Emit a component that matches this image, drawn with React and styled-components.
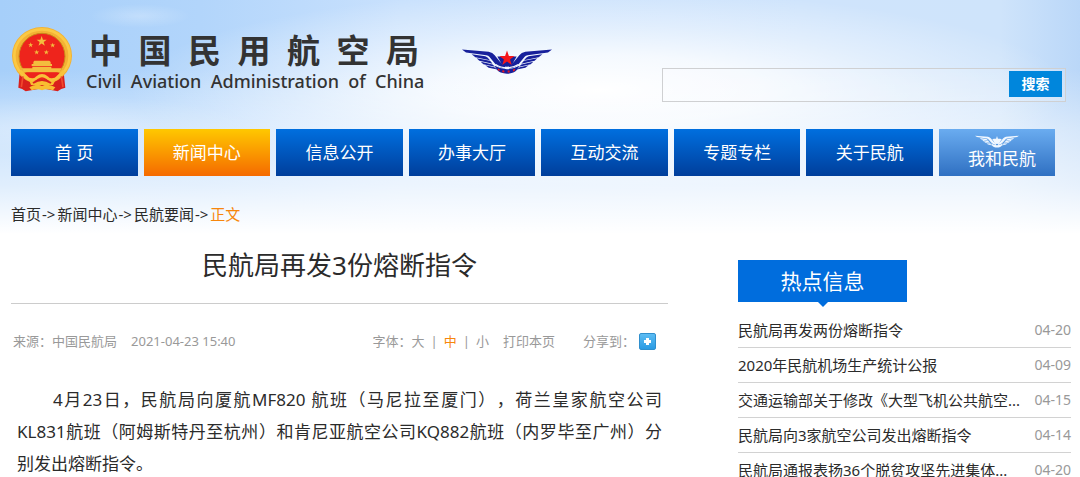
import React from 'react';
import styled, { createGlobalStyle } from 'styled-components';

const GlobalStyle = createGlobalStyle`
	* {
		box-sizing: border-box;
	}

	body {
		margin: 0;
		background: #fff;
		color: #2b2b2b;
		font-family: 'Noto Sans', 'Noto Sans CJK SC', sans-serif;
		font-size: 15px;
	}

	a {
		color: inherit;
		text-decoration: none;
	}

	h1, h2, p, ul {
		margin: 0;
		padding: 0;
		font-weight: 400;
	}
`;

const Page = styled.div`
	padding: 0 9px 24px 11px;
	background:
		linear-gradient(to bottom, transparent 70px, rgba(255, 255, 255, 0.4) 128px, rgba(255, 255, 255, 0.65) 185px, #fff 234px),
		radial-gradient(ellipse 50px 12px at 140px 16px, rgba(255, 255, 255, 0.25), transparent 100%),
		radial-gradient(ellipse 190px 30px at 60px 126px, rgba(255, 255, 255, 0.3), transparent 100%),
		radial-gradient(ellipse 470px 100px at 600px 90px, #fff 0%, rgba(255, 255, 255, 0.8) 35%, rgba(255, 255, 255, 0.4) 65%, transparent 100%),
		linear-gradient(to right, #a6cffa 0, #b2d5fb 200px, #c9e1fd 400px, #cfe4fc 800px, #cfe4fb 1000px, #bad7f8 1080px);
	background-color: #fff;
`;

const Header = styled.header`
	display: flex;
	align-items: flex-start;
	padding: 27px 5px 27px 0;
`;

const Brand = styled.a`
	display: flex;
	align-items: flex-start;
	color: #333;
`;

const BrandText = styled.div`
	padding-left: 13px;
`;

const BrandName = styled.div`
	padding-left: 3px;
	font-family: 'Noto Sans CJK SC', sans-serif;
	font-size: 33px;
	font-weight: 700;
	line-height: 45px;
	white-space: nowrap;
`;

const BrandSub = styled.div`
	font-size: 18px;
	font-weight: 500;
	line-height: 18px;
	white-space: pre;
`;

const WingMark = styled.div`
	padding: 22px 0 0 38px;
`;

const Search = styled.form`
	display: flex;
	flex: 0 0 404px;
	height: 34px;
	margin: 41px 0 0 auto;
	padding: 2px 3px 4px 2px;
	border: 1px solid #cfd0d2;
	background: rgba(255, 255, 255, 0.15);
`;

const SearchInput = styled.input`
	flex: 1;
	min-width: 0;
	border: 0;
	outline: 0;
	background: transparent;
	font: inherit;
`;

const SearchButton = styled.button`
	width: 53px;
	padding: 0;
	border: 0;
	background: #0086dc;
	color: #fff;
	font-family: inherit;
	font-size: 14px;
	font-weight: 700;
	line-height: 26px;
`;

const Nav = styled.nav`
	display: flex;
	gap: 6px;
	margin-right: 16px;
`;

const NavItem = styled.a`
	flex: 1;
	height: 47px;
	background: ${(p) => (p.$active ? 'linear-gradient(#ffc800, #f56a00)' : 'linear-gradient(#006fdf, #003e9b)')};
	color: #fff;
	font-size: 17px;
	line-height: 48px;
	text-align: center;
	white-space: pre;
`;

const NavExtra = styled.a`
	display: flex;
	flex: 0 0 116px;
	flex-direction: column;
	align-items: center;
	height: 47px;
	padding-top: 6px;
	background: linear-gradient(#6aacf0, #2f70c2);
	color: #fff;
	font-size: 17px;
	line-height: 22px;

	span {
		padding-left: 10px;
	}
`;

const Crumbs = styled.nav`
	padding-top: 26px;
	font-size: 15px;
	line-height: 24px;
`;

const Arrow = styled.span`
	padding: 0 2px 0 1px;
`;

const Current = styled.span`
	color: #f7860c;
`;

const Columns = styled.div`
	display: grid;
	grid-template-columns: 657fr 333fr;
	gap: 70px;
	padding-top: 16px;
`;

const Title = styled.h1`
	padding: 3px 0 18px;
	border-bottom: 1px solid #ccc;
	font-size: 26px;
	line-height: 40px;
	text-align: center;
`;

const Meta = styled.div`
	display: flex;
	justify-content: space-between;
	padding: 25px 12px 0 2px;
	color: #999;
	font-size: 13px;
	line-height: 24px;
`;

const MetaGroup = styled.div`
	display: flex;
	align-items: center;
	gap: ${(p) => p.$gap}px;
`;

const SizeButton = styled.button`
	padding: 0;
	border: 0;
	background: none;
	color: ${(p) => (p.$active ? '#f7860c' : 'inherit')};
	font: inherit;
`;

const ShareButton = styled.button`
	display: flex;
	align-items: center;
	justify-content: center;
	width: 17px;
	height: 17px;
	padding: 0;
	border: 1px solid #2f8fcd;
	border-radius: 2px;
	background: linear-gradient(#5cbcf3, #2a9be3);
`;

const Body = styled.p`
	padding: 31px 6px 0;
	font-size: 17px;
	line-height: 32px;
	text-align: justify;
	text-indent: 36px;
	text-spacing-trim: space-all;
`;

const HotTitle = styled.h2`
	position: relative;
	width: 169px;
	margin-top: 18px;
	background: #006ddd;
	color: #fff;
	font-size: 21px;
	line-height: 42px;
	text-align: center;

	&::after {
		content: '';
		position: absolute;
		top: 100%;
		left: 50%;
		margin-left: -5px;
		border: 5px solid transparent;
		border-top-color: #006ddd;
		border-bottom: 0;
	}
`;

const HotList = styled.ul`
	padding-top: 11px;
	list-style: none;
`;

const HotItem = styled.li`
	display: flex;
	justify-content: space-between;
	border-bottom: 1px solid #d2d2d2;
	line-height: 34px;
	white-space: nowrap;
`;

const HotDate = styled.time`
	color: #999;
	font-size: 14px;
`;

const navItems = ['首 页', '新闻中心', '信息公开', '办事大厅', '互动交流', '专题专栏', '关于民航'];

const crumbs = ['首页', '新闻中心', '民航要闻'];

const hotItems = [
	{ title: '民航局再发两份熔断指令', date: '04-20' },
	{ title: '2020年民航机场生产统计公报', date: '04-09' },
	{ title: '交通运输部关于修改《大型飞机公共航空...', date: '04-15' },
	{ title: '民航局向3家航空公司发出熔断指令', date: '04-14' },
	{ title: '民航局通报表扬36个脱贫攻坚先进集体...', date: '04-20' },
];

const STAR = 'M0-10 2.4-3.1 9.5-3.1 3.8 1.2 5.9 8.1 0 3.9-5.9 8.1-3.8 1.2-9.5-3.1-2.4-3.1Z';

function Emblem() {
	return (
		<svg width="62" height="65" viewBox="0 0 186 195" aria-hidden="true">
			<path d="M26 136 L22 182 Q34 184 44 193 L82 186 H104 L140 193 Q150 184 163 182 L158 136Z" fill="#d9201c" />
			<ellipse cx="93" cy="86" rx="90" ry="86" fill="#f3b234" />
			<ellipse cx="93" cy="86" rx="83" ry="79" fill="none" stroke="#fbc944" strokeWidth="8" />
			<circle cx="93" cy="88" r="69" fill="#ee241c" stroke="#c98a18" strokeWidth="3" />
			<g fill="#f3bd3e">
				<path d={STAR} transform="translate(92 43) scale(1.6)" />
				<path d={STAR} transform="translate(59 54) scale(.8)" />
				<path d={STAR} transform="translate(125 55) scale(.8)" />
				<path d={STAR} transform="translate(77 76) scale(.8)" />
				<path d={STAR} transform="translate(106 76) scale(.8)" />
				<path d="M67 105 L70 101 H115 L119 105 V111 H123 V117 H62 V111 H67Z" />
				<path d="M64 119 H121 V124 H152 L146 136 H39 L32 124 H64Z" />
			</g>
			<path d="M39 137 H147 Q140 150 123 158 Q93 172 63 158 Q45 150 39 137Z" fill="#ee241c" />
			<path
				d="M28 132 L52 156 Q70 162 78 152 Q93 140 108 152 Q116 162 134 156 L159 132"
				fill="none"
				stroke="#f8c33a"
				strokeWidth="9"
			/>
			<path d="M54 158 Q72 170 93 155 Q114 170 134 158 L126 174 H60Z" fill="#f8bd31" />
			<path d="M66 168 Q93 150 120 168" fill="none" stroke="#d9201c" strokeWidth="6" />
			<path d="M55 181 Q74 168 93 177 Q112 168 133 181 L126 190 Q108 183 93 190 Q78 183 62 190Z" fill="#f8bd31" />
			<path d="M36 148 L31 180 M151 148 L156 180" stroke="#f04a2e" strokeWidth="5" />
		</svg>
	);
}

function Wing() {
	return (
		<g>
			<path d="M0 1 L80 8 Q92 11 98 18 L114 38 Q122 47 130 50 L128 58 Q108 55 98 42 L82 23 Q79 19 73 18 L12 10Z" />
			<path d="M29 15 L70 21 Q76 23 84 33 L40 24Z" />
			<path d="M44 27 L84 35 L92 44 L52 35Z" />
			<path d="M56 38 L92 46 L99 53 L64 45Z" />
			<path d="M70 48 L97 54 L106 61 L80 56Z" />
		</g>
	);
}

function Wings({ width, height, color, accent }) {
	return (
		<svg width={width} height={height} viewBox="0 0 270 74" aria-hidden="true">
			<g fill={color}>
				<Wing />
				<g transform="translate(270 0) scale(-1 1)">
					<Wing />
				</g>
				<path d="M106 22 H164 L148 50 Q135 56 122 50Z" />
				<path d="M98 50 Q116 60 135 60 Q154 60 172 50 Q166 66 154 70 Q135 77 116 70 Q104 66 98 50Z" />
			</g>
			<path d={STAR} transform="translate(135 28) scale(2.4)" fill={accent || color} />
			{accent && (
				<g>
					<path d="M101 46 Q116 56 135 56 Q154 56 169 46" fill="none" stroke="#f3f7fe" strokeWidth="4" />
					<path
						d="M107 58 l6 2 v5 l-5 -1z M121 63 l6 1 v6 l-6 -1z M137 64 h6 v6 h-6z M153 61 l6 -2 l-1 6 l-5 2z"
						fill={accent}
					/>
				</g>
			)}
		</svg>
	);
}

export default function App() {
	return (
		<Page>
			<GlobalStyle />
			<Header>
				<Brand href="#">
					<Emblem />
					<BrandText>
						<BrandName>{'中国民用航空局'.split('').join('\u2002')}</BrandName>
						<BrandSub>{'Civil  Aviation  Administration  of  China'}</BrandSub>
					</BrandText>
				</Brand>
				<WingMark>
					<Wings width={90} height={25} color="#17209b" accent="#f5161b" />
				</WingMark>
				<Search onSubmit={(e) => e.preventDefault()}>
					<SearchInput type="text" aria-label="搜索" />
					<SearchButton type="submit">搜索</SearchButton>
				</Search>
			</Header>

			<Nav>
				{navItems.map((item, i) => (
					<NavItem key={item} href="#" $active={i === 1}>
						{item}
					</NavItem>
				))}
				<NavExtra href="#">
					<Wings width={44} height={13} color="#f2f8ff" />
					<span>我和民航</span>
				</NavExtra>
			</Nav>

			<Crumbs>
				{crumbs.map((crumb) => (
					<React.Fragment key={crumb}>
						<a href="#">{crumb}</a>
						<Arrow>-&gt;</Arrow>
					</React.Fragment>
				))}
				<Current>正文</Current>
			</Crumbs>

			<Columns>
				<article>
					<Title>民航局再发3份熔断指令</Title>
					<Meta>
						<MetaGroup $gap={14}>
							<span>来源：中国民航局</span>
							<time>2021-04-23 15:40</time>
						</MetaGroup>
						<MetaGroup $gap={28}>
							<MetaGroup $gap={14}>
								<MetaGroup $gap={6}>
									<span>
										字体：<SizeButton type="button">大</SizeButton>
									</span>
									|
									<SizeButton type="button" $active>
										中
									</SizeButton>
									|
									<SizeButton type="button">小</SizeButton>
								</MetaGroup>
								<a href="#">打印本页</a>
							</MetaGroup>
							<MetaGroup $gap={4}>
								<span>分享到：</span>
								<ShareButton type="button" aria-label="分享">
									<svg width="9" height="9" viewBox="0 0 9 9" aria-hidden="true">
										<path d="M3 1h3v2h2v3H6v2H3V6H1V3h2z" fill="#fff" />
									</svg>
								</ShareButton>
							</MetaGroup>
						</MetaGroup>
					</Meta>
					<Body>
						4月23日，民航局向厦航MF820 航班（马尼拉至厦门），荷兰皇家航空公司KL831航班（阿姆斯特丹至杭州）和肯尼亚航空公司KQ882航班（内罗毕至广州）分别发出熔断指令。
					</Body>
				</article>

				<aside>
					<HotTitle>热点信息</HotTitle>
					<HotList>
						{hotItems.map((item) => (
							<HotItem key={item.title}>
								<a href="#">{item.title}</a>
								<HotDate>{item.date}</HotDate>
							</HotItem>
						))}
					</HotList>
				</aside>
			</Columns>
		</Page>
	);
}
